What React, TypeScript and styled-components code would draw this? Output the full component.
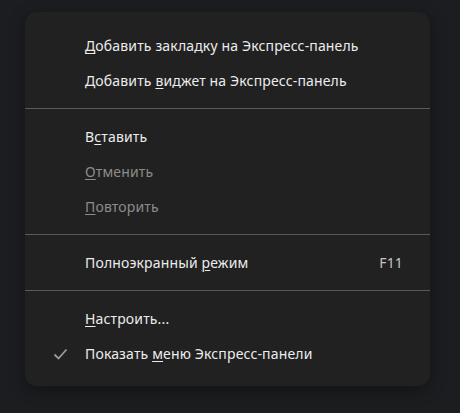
import styled, { createGlobalStyle } from "styled-components";

const GlobalStyle = createGlobalStyle`
    html, body {
        margin: 0;
        padding: 0;
        background-color: #1c1d20;
    }
`;

const Page = styled.div`
    width: 460px;
    height: 413px;
    padding: 12px 30px 0 25px;
    box-sizing: border-box;
    font-family: "Noto Sans", "Open Sans", sans-serif;
`;

const Menu = styled.div`
    width: 405px;
    padding: 16px 0 15px;
    box-sizing: border-box;
    background-color: #212121;
    border-radius: 12px;
    box-shadow: 0 4px 16px rgba(0, 0, 0, 0.35);
    display: flex;
    flex-direction: column;
`;

const Item = styled.div<{ $disabled?: boolean }>`
    height: 35px;
    display: grid;
    grid-template-columns: 60px 1fr auto;
    align-items: center;
    padding-right: 27px;
    font-size: 14px;
    letter-spacing: 0.15px;
    color: ${props => (props.$disabled ? "#8c8c8c" : "#ececec")};
`;

const Check = styled.span`
    display: flex;
    justify-content: flex-end;
    padding-right: 17px;
    color: #9a9a9a;
`;

const Shortcut = styled.span`
    color: #c4c4c4;
    font-size: 14px;
`;

const Key = styled.u`
    text-decoration-thickness: 1px;
    text-underline-offset: 2px;
`;

const Separator = styled.div`
    height: 1px;
    margin: 10px 0;
    background-color: #5a5a5a;
`;

function CheckIcon() {
    return (
        <svg width="15" height="12" viewBox="0 0 15 12">
            <path d="M1.5 6.5 L5.5 10.5 L13.5 1.5" fill="none" stroke="currentColor" strokeWidth="1.8" />
        </svg>
    );
}

export default function App() {
    return (
        <Page>
            <GlobalStyle />
            <Menu>
                <Item>
                    <span />
                    <span><Key>Д</Key>обавить закладку на Экспресс-панель</span>
                </Item>
                <Item>
                    <span />
                    <span>Добавить <Key>в</Key>иджет на Экспресс-панель</span>
                </Item>
                <Separator />
                <Item>
                    <span />
                    <span>В<Key>с</Key>тавить</span>
                </Item>
                <Item $disabled>
                    <span />
                    <span><Key>О</Key>тменить</span>
                </Item>
                <Item $disabled>
                    <span />
                    <span><Key>П</Key>овторить</span>
                </Item>
                <Separator />
                <Item>
                    <span />
                    <span>Полноэкранный <Key>р</Key>ежим</span>
                    <Shortcut>F11</Shortcut>
                </Item>
                <Separator />
                <Item>
                    <span />
                    <span><Key>Н</Key>астроить...</span>
                </Item>
                <Item>
                    <Check><CheckIcon /></Check>
                    <span>Показать <Key>м</Key>еню Экспресс-панели</span>
                </Item>
            </Menu>
        </Page>
    );
}
